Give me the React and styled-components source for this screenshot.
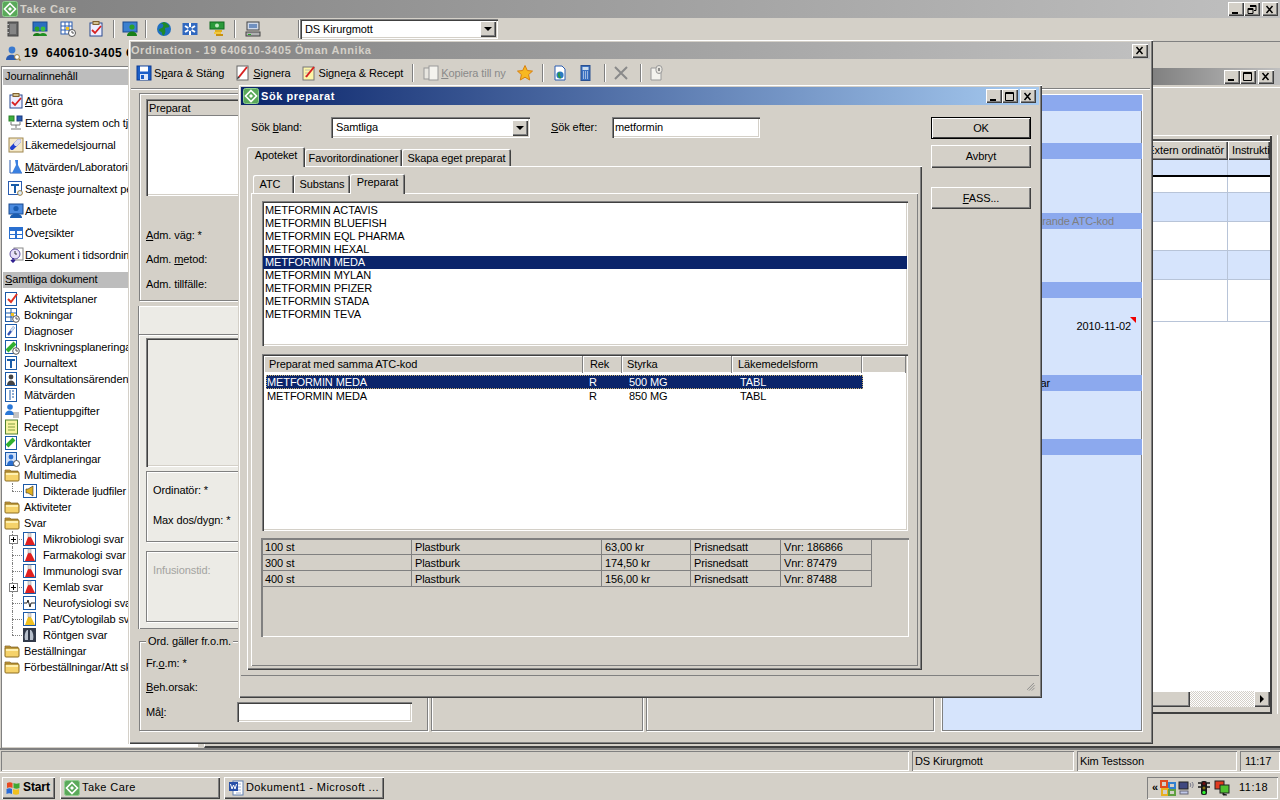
import React from "react";
import styled, { createGlobalStyle, css } from "styled-components";

const Global = createGlobalStyle`
    html, body { margin: 0; padding: 0; background: #d4d0c8; overflow: hidden; }
    * { box-sizing: border-box; }
    u { text-underline-offset: 1px; }
`;

const FONT = `"Liberation Sans", Arial, sans-serif`;

const raised = css`
    box-shadow: inset 1px 1px #fff, inset -1px -1px #404040, inset -2px -2px #808080;
`;
const sunken = css`
    box-shadow: inset 1px 1px #808080, inset 2px 2px #404040, inset -1px -1px #fff, inset -2px -2px #d4d0c8;
`;
const thin = css`
    box-shadow: inset 1px 1px #808080, inset -1px -1px #fff;
`;

// ---------- icons ----------
const paths = {
    logo: <><rect x="0.5" y="0.5" width="15" height="15" rx="2" fill="#5aa95a" stroke="#8fcf8f" /><path d="M8 2.5 13.5 8 8 13.5 2.5 8Z" fill="none" stroke="#fff" strokeWidth="1.6" /><path d="M6 8l2-2 2 2-2 2z" fill="#fff" /></>,
    book: <><rect x="3" y="1" width="10" height="14" fill="#666" stroke="#444" /><rect x="5" y="3" width="6" height="10" fill="#858585" /><rect x="2" y="3" width="2" height="1" fill="#bbb" /><rect x="2" y="7" width="2" height="1" fill="#bbb" /><rect x="2" y="11" width="2" height="1" fill="#bbb" /></>,
    people: <><rect x="1" y="1" width="14" height="9" fill="#2a6fc0" stroke="#1a4a90" /><circle cx="5" cy="8" r="2.4" fill="#2aa02a" /><path d="M1 15c0-4 8-4 8 0z" fill="#187a18" /><circle cx="11" cy="8" r="2.4" fill="#3cc03c" /><path d="M7 15c0-4 8-4 8 0z" fill="#1f8f1f" /></>,
    calclock: <><rect x="1" y="1" width="11" height="12" fill="#fff" stroke="#2a5cb0" /><path d="M1 5h11M1 9h11M5 1v12M9 1v12" stroke="#2a5cb0" /><rect x="6" y="6" width="3" height="3" fill="#f0c020" /><circle cx="12" cy="12" r="3.5" fill="#fff" stroke="#555" /><path d="M12 10v2h2" stroke="#555" fill="none" /></>,
    clipcheck: <><rect x="2" y="2" width="12" height="13" fill="#eef" stroke="#2a4a90" /><rect x="5" y="0.5" width="6" height="3" fill="#d0c090" stroke="#806030" /><path d="M4 9l3 3 6-7" stroke="#d82020" strokeWidth="1.8" fill="none" /></>,
    monitorperson: <><rect x="1" y="1" width="14" height="10" fill="#3a80d0" stroke="#1a4a90" /><circle cx="10" cy="6" r="2.6" fill="#2aa02a" /><path d="M5 15c0-6 10-6 10 0z" fill="#188018" /></>,
    globe: <><circle cx="8" cy="8" r="7" fill="#1e6fc0" /><path d="M4 3c3-1 4 1 3 3S3 7 3 9s3 1 3 3 1 3 2 2 2-4 1-6 3-1 4-2-2-4-5-5z" fill="#1f8a2a" /></>,
    network: <><rect x="0.5" y="2" width="15" height="12" fill="#3068c0" /><path d="M8 2v12M3 5l10 6M13 5 3 11" stroke="#fff" strokeWidth="2" /><circle cx="8" cy="8" r="2" fill="#3068c0" /></>,
    money: <><rect x="1" y="1" width="14" height="7" fill="#2a9a3a" stroke="#106a20" /><circle cx="8" cy="4.5" r="2" fill="#bfe8bf" /><rect x="6" y="9" width="7" height="2" fill="#e0b020" /><rect x="5" y="11" width="7" height="2" fill="#f0c840" /><rect x="7" y="13" width="7" height="2" fill="#c89010" /></>,
    computer: <><rect x="2" y="1" width="12" height="8" fill="#cfd8e8" stroke="#444" /><rect x="4" y="3" width="8" height="4" fill="#7090c0" /><rect x="1" y="11" width="14" height="4" fill="#b0b0b0" stroke="#444" /><rect x="3" y="13" width="3" height="1" fill="#2a2" /></>,
    floppy: <><rect x="1" y="1" width="14" height="14" fill="#1c5fc8" stroke="#0c3a90" /><rect x="4" y="1.5" width="8" height="5" fill="#fff" /><rect x="4" y="9" width="8" height="6" fill="#dfe8f8" /><rect x="5" y="10" width="3" height="4" fill="#1c5fc8" /></>,
    sign: <><rect x="2" y="1" width="11" height="14" fill="#fff" stroke="#666" /><path d="M4 12 12 2" stroke="#d82020" strokeWidth="2" /><path d="M2 14l3-1-2-2z" fill="#333" /></>,
    signy: <><rect x="2" y="2" width="11" height="13" fill="#fdf6a8" stroke="#777" /><path d="M4 5h5M4 8h4M4 11h3" stroke="#bba" /><path d="M5 12 13 2" stroke="#d82020" strokeWidth="2" /></>,
    copygrey: <><rect x="1" y="3" width="9" height="11" fill="#e8e6e0" stroke="#999" /><rect x="6" y="1" width="9" height="14" fill="#f4f3ee" stroke="#999" /></>,
    star: <path d="M8 .5l2.3 5 5.2.6-3.9 3.5 1.1 5.4L8 12.2 3.3 15l1.1-5.4L.5 6.1l5.2-.6z" fill="#f8b820" stroke="#d88010" />,
    docglobe: <><path d="M3 1h7l3 3v11H3z" fill="#fff" stroke="#2a5cb0" /><circle cx="8" cy="10" r="3.6" fill="#2a7ac0" /><path d="M7 7c2 1 0 3 1 4s2 2 0 2.4c-2-1-3-4-1-6.4z" fill="#2a9a3a" /></>,
    calc: <><rect x="3" y="0.5" width="9" height="15" fill="#3a70c0" stroke="#2a5090" /><rect x="4.5" y="2" width="6" height="3" fill="#cde" /><path d="M5 7h1M7 7h1M9 7h1M5 9h1M7 9h1M9 9h1M5 11h1M7 11h1M9 11h1M5 13h1M7 13h1M9 13h1" stroke="#fff" /></>,
    xgrey: <path d="M2 2 14 14M14 2 2 14" stroke="#8a8a8a" strokeWidth="2" />,
    clipdoc: <><path d="M3 3h6l4 3v9H3z" fill="#f4f3ee" stroke="#999" /><rect x="8" y="0.5" width="6" height="8" rx="3" fill="#e8e6e0" stroke="#999" /><path d="M11 3v3" stroke="#666" strokeWidth="1.4" /></>,
    magperson: <><circle cx="7" cy="5" r="3.4" fill="#3a7ad0" /><path d="M1 15c0-7 11-7 11 0z" fill="#2a5cb0" /><circle cx="12" cy="12" r="2.4" fill="#fff" stroke="#a08040" /><path d="M14 14l1.5 1.5" stroke="#a08040" strokeWidth="1.5" /></>,
    extern: <><rect x="1" y="1" width="5" height="5" fill="#3fb03f" stroke="#2a802a" /><rect x="9" y="1" width="5" height="5" fill="#2a5cb0" stroke="#1a3a80" /><path d="M3 7v3h9V7M8 10v3M3 14h10" stroke="#777" fill="none" /></>,
    pill: <><rect x="1" y="1" width="14" height="14" fill="#f4e8c8" stroke="#a08850" /><path d="M4 11 11 4" stroke="#2040d0" strokeWidth="4" strokeLinecap="round" /><path d="M8 7 11 4" stroke="#dde" strokeWidth="4" strokeLinecap="round" /></>,
    flask: <><path d="M2 1v13h12" stroke="#2a5cb0" fill="none" /><path d="M7 1h3v5l4 8H4l4-8z" fill="#3a80e0" /></>,
    tmag: <><rect x="0.5" y="0.5" width="13" height="13" fill="#fff" stroke="#2a5cb0" /><path d="M3 3h8v2H8v7H6V5H3z" fill="#1a5ca8" /><circle cx="12" cy="12" r="2.4" fill="#def" stroke="#a08040" /></>,
    arbete: <><rect x="1" y="1" width="14" height="10" fill="#4a8adf" stroke="#1a4a90" /><circle cx="8" cy="5.5" r="2.6" fill="#1a5cb0" /><path d="M2 15c0-6 12-6 12 0z" fill="#1a5cb0" /></>,
    grid: <><rect x="1" y="2" width="14" height="12" fill="#2a70d0" /><path d="M2 6h5v3H2zM9 6h5v3H9zM2 10h5v3H2zM9 10h5v3H9z" fill="#fff" /></>,
    docclock: <><rect x="6" y="1" width="9" height="12" fill="#fff" stroke="#888" /><circle cx="7" cy="7" r="5" fill="#e8e0f8" stroke="#6050a0" /><path d="M7 4v3h2" stroke="#333" fill="none" /><path d="M5 11v4M3 13l2 2 2-2" stroke="#302090" fill="none" strokeWidth="1.5" /></>,
    d_plan: <><rect x="1.5" y="1.5" width="11" height="13" fill="#fff" stroke="#1c5aa8" /><path d="M4 8l3 3 6-8" stroke="#e03020" strokeWidth="2" fill="none" /></>,
    d_book: <><rect x="1.5" y="1.5" width="11" height="13" fill="#fff" stroke="#1c5aa8" /><path d="M2 6h10M2 10h10M7 2v12" stroke="#1c5aa8" /><rect x="7" y="6" width="3" height="3" fill="#f0c020" /><circle cx="12" cy="12" r="3.3" fill="#fff" stroke="#555" /><path d="M12 10v2h2" stroke="#555" fill="none" /></>,
    d_diag: <><rect x="1.5" y="1.5" width="11" height="13" fill="#fff" stroke="#1c5aa8" /><path d="M4 12 10 4" stroke="#3050b0" strokeWidth="2.4" /><path d="M7 8 10 4" stroke="#cde" strokeWidth="2.4" /></>,
    d_insk: <><rect x="1.5" y="1.5" width="11" height="13" fill="#fff" stroke="#1c5aa8" /><path d="M3 12 11 4" stroke="#30b030" strokeWidth="4" /><circle cx="12" cy="12" r="3.3" fill="#fff" stroke="#555" /><path d="M12 10v2h2" stroke="#555" fill="none" /></>,
    d_text: <><rect x="1.5" y="1.5" width="11" height="13" fill="#fff" stroke="#1c5aa8" /><path d="M3 4h8v2H8v7H6V6H3z" fill="#1a5ca8" /></>,
    d_kons: <><rect x="1.5" y="1.5" width="11" height="13" fill="#fff" stroke="#1c5aa8" /><circle cx="7" cy="6" r="2.4" fill="#444" /><path d="M3 14c0-6 8-6 8 0z" fill="#444" /></>,
    d_mat: <><rect x="1.5" y="1.5" width="11" height="13" fill="#fff" stroke="#1c5aa8" /><path d="M6 3v10M8 4h2M8 7h2M8 10h2" stroke="#1c5aa8" /></>,
    d_pat: <><circle cx="6" cy="4" r="2.8" fill="#2a78d8" /><path d="M1 12c0-6 9-6 9 0z" fill="#2a78d8" /><path d="M9 10h6M9 12h6M9 14h6" stroke="#888" /></>,
    d_recept: <><rect x="1.5" y="1" width="12" height="14" fill="#f8f4a0" stroke="#508030" /><path d="M4 5h7M4 8h7M4 11h7" stroke="#80a040" /></>,
    d_vard: <><rect x="1.5" y="1.5" width="11" height="13" fill="#fff" stroke="#1c5aa8" /><path d="M3 11 10 4" stroke="#30b030" strokeWidth="4" /></>,
    d_plan2: <><rect x="1.5" y="1.5" width="11" height="13" fill="#cfe0f8" stroke="#1c5aa8" /><circle cx="7" cy="6" r="2.4" fill="#2a6fd0" /><path d="M3 14c0-6 8-6 8 0z" fill="#2a6fd0" /><circle cx="12.5" cy="12.5" r="3" fill="#fff" stroke="#555" /></>,
    folder: <><path d="M1 4V3h5l1 1h7v2H1z" fill="#c9a040" stroke="#806020" strokeWidth=".7" /><rect x="1" y="5" width="14" height="9" rx="1" fill="#f5d26a" stroke="#8c6c20" /><rect x="2" y="6" width="12" height="2" fill="#fff0b0" /></>,
    sound: <><rect x="1.5" y="1.5" width="13" height="13" fill="#fff" stroke="#1c5aa8" /><path d="M4 6h2l5-3v10L6 10H4z" fill="#e0b020" stroke="#333" strokeWidth=".6" /></>,
    labred: <><rect x="1.5" y="1.5" width="12" height="13" fill="#fff" stroke="#1c5aa8" /><path d="M6 2h3v4l4 8H3l3-8z" fill="#e02020" /><path d="M6 2h3v4H6z" fill="#ddd" stroke="#999" strokeWidth=".5" /></>,
    labyellow: <><rect x="1.5" y="1.5" width="12" height="13" fill="#fff" stroke="#1c5aa8" /><path d="M6 2h3v4l4 8H3l3-8z" fill="#f0c020" /><path d="M6 2h3v4H6z" fill="#ddd" stroke="#999" strokeWidth=".5" /></>,
    neuro: <><rect x="1.5" y="1.5" width="12" height="13" fill="#fff" stroke="#1c5aa8" /><path d="M2 8h3l1-3 2 7 1-4h4" stroke="#222" fill="none" /></>,
    xray: <><rect x="1" y="1" width="13" height="14" fill="#303848" /><path d="M5 3c-2 2-3 6-2 10h3V3zM9 3c2 2 3 6 2 10H8V3z" fill="#b8c0cc" /></>,
    winflag: <><path d="M2 3c2-1 4-1 5.5 0v5C6 7 4 7 2 8z" fill="#e84a20" /><path d="M8.5 3c2 1 4 1 6 0v5c-2 1-4 1-6 0z" fill="#40a830" /><path d="M1.5 9c2-1 4-1 5.5 0v5c-2-1-3.500-1-5.500 0z" fill="#2a6cd8" /><path d="M8 9c2 1 4 1 6 0v5c-2 1-4 1-6 0z" fill="#f0c020" /></>,
    word: <><rect x="5" y="1" width="10" height="14" fill="#fff" stroke="#6080b0" /><path d="M8 4h5M8 7h5M8 10h5M8 13h5" stroke="#a0b0d0" /><rect x="1" y="2" width="9" height="9" fill="#2850a8" /><path d="M2.500 4l1.500 5 1.500-4 1.500 4 1.500-5" stroke="#fff" fill="none" /></>,
    office: <><rect x="1" y="1" width="6" height="6" fill="none" stroke="#e04a20" strokeWidth="2" /><rect x="9" y="3" width="6" height="5" fill="none" stroke="#3080d0" strokeWidth="2" /><rect x="2" y="9" width="6" height="6" fill="none" stroke="#e8b020" strokeWidth="2" /><rect x="9" y="10" width="6" height="5" fill="none" stroke="#60a040" strokeWidth="2" /></>,
    netpc: <><rect x="1" y="2" width="9" height="7" fill="#404880" stroke="#222" /><rect x="2" y="11" width="8" height="3" fill="#c0c8e8" stroke="#667" /><path d="M12 3c1 1 1 3 0 4M14 2c1.500 2 1.500 4 0 6" stroke="#778" fill="none" /></>,
    traffic: <><rect x="5" y="1" width="6" height="14" rx="2" fill="#1a1a1a" /><path d="M2 3h3M11 3h3M2 7h3M11 7h3" stroke="#1a1a1a" strokeWidth="1.5" /><circle cx="8" cy="3.500" r="1.500" fill="#701010" /><circle cx="8" cy="8" r="1.500" fill="#807010" /><circle cx="8" cy="12.500" r="1.700" fill="#30f030" /></>,
    screens: <><rect x="1" y="1" width="9" height="8" fill="#e03a20" stroke="#222" /><rect x="6" y="5" width="9" height="8" fill="#50c030" stroke="#222" /><path d="M9 13v2h4" stroke="#222" /></>,
    grip: <path d="M10 0 0 10M11 3 3 11M11 7 7 11" stroke="#808080" strokeWidth="1.200" fill="none" />,
};

const Svg = styled.svg`
    flex: none;
    display: block;
`;

const Icon = ({ name, w = 16, h = 16 }) => (
    <Svg width={w} height={h} viewBox="0 0 16 16">{paths[name]}</Svg>
);

// ---------- desktop ----------
const Desktop = styled.div`
    position: relative;
    width: 1280px;
    height: 800px;
    overflow: hidden;
    background: #d4d0c8;
    font: 11px/13px ${FONT};
    letter-spacing: -0.1px;
    color: #000;
    display: flex;
    flex-direction: column;
`;

const TitleBar = styled.div`
    flex: none;
    height: ${(p) => p.$h || 18}px;
    margin: ${(p) => p.$m || 0};
    display: flex;
    align-items: center;
    padding: ${(p) => p.$pad || "0 2px"};
    background: ${(p) => (p.$active
        ? "linear-gradient(90deg, #0a246a, #a6caf0)"
        : "linear-gradient(90deg, #808080, #c0c0c0)")};
    color: ${(p) => (p.$active ? "#fff" : "#d4d0c8")};
    font-weight: bold;
    font-size: 11px;
    letter-spacing: 0.55px;
`;

const TitleText = styled.span`
    flex: 1;
    margin-left: ${(p) => p.$ml || 0}px;
    white-space: nowrap;
`;

const CtrlBtn = styled.div`
    width: 16px;
    height: 14px;
    background: #d4d0c8;
    ${raised};
    display: flex;
    align-items: center;
    justify-content: center;
    flex: none;
    margin-left: ${(p) => p.$ml || 0}px;
`;

const CtrlGlyph = ({ kind }) => (
    <Svg width="10" height="9" viewBox="0 0 10 9">
        {kind === "min" && <path d="M1 7h6v2H1z" fill="#000" />}
        {kind === "max" && <path d="M.5 .5h8v8h-8zM.5 1.500h8" fill="none" stroke="#000" />}
        {kind === "res" && <path d="M3 .5h6v5H7M3 1.500h6M1 3.500h5v5H1zM1 4.500h5" fill="none" stroke="#000" />}
        {kind === "x" && <path d="M1.500 1 7.500 8M7.500 1 1.500 8" stroke="#000" strokeWidth="1.500" />}
    </Svg>
);

const Toolbar = styled.div`
    flex: none;
    height: ${(p) => p.$h || 22}px;
    display: flex;
    align-items: center;
    padding-left: ${(p) => p.$pl || 0}px;
`;

const ToolItem = styled.div`
    display: flex;
    align-items: center;
    gap: ${(p) => p.$gap ?? 2}px;
    margin-left: ${(p) => p.$ml || 0}px;
    color: ${(p) => (p.$off ? "#8a8a8a" : "#000")};
    white-space: nowrap;
`;

const ToolSep = styled.div`
    flex: none;
    width: 2px;
    height: 18px;
    margin-left: ${(p) => p.$ml || 0}px;
    border-left: 1px solid #808080;
    border-right: 1px solid #fff;
`;

const Combo = styled.div`
    flex: none;
    width: ${(p) => p.$w}px;
    height: ${(p) => p.$h || 20}px;
    margin-left: ${(p) => p.$ml || 0}px;
    background: #fff;
    ${sunken};
    display: flex;
    align-items: center;
    padding: 0 2px 0 5px;
`;

const ComboText = styled.span`
    flex: 1;
`;

const ComboBtn = styled.div`
    width: 16px;
    height: 16px;
    background: #d4d0c8;
    ${raised};
    display: flex;
    align-items: center;
    justify-content: center;
    &::after {
        content: "";
        border-left: 4px solid transparent;
        border-right: 4px solid transparent;
        border-top: 4px solid #000;
    }
`;

const Workspace = styled.div`
    flex: 1;
    min-height: 0;
    display: flex;
`;

const LeftPane = styled.div`
    width: 204px;
    flex: none;
    display: flex;
    flex-direction: column;
`;

const RightPane = styled.div`
    flex: 1;
    border-bottom: 2px solid #404040;
    border-left: 1px solid #fff;
    margin-top: 2px;
`;

const PatientRow = styled.div`
    height: 26px;
    flex: none;
    display: flex;
    align-items: center;
    gap: 3px;
    padding-left: 5px;
    font-weight: bold;
    font-size: 12px;
    letter-spacing: 0.5px;
    white-space: nowrap;
`;

const Nav = styled.div`
    flex: 1;
    margin: 0 5px 0 1px;
    background: #fff;
    box-shadow: inset 1px 1px #808080, inset -1px -1px #d4d0c8;
    padding: 3px 0 0 2px;
    overflow: hidden;
`;

const NavHead = styled.div`
    height: 16px;
    line-height: 15px;
    background: #bdbdbd;
    padding-left: 2px;
    white-space: nowrap;
`;

const NavList = styled.div`
    padding: ${(p) => p.$pad};
`;

const NavItem = styled.div`
    height: 22px;
    display: flex;
    align-items: center;
    gap: 1px;
    padding-left: 5px;
    white-space: nowrap;
`;

const TreeItem = styled.div`
    position: relative;
    height: 16px;
    display: flex;
    align-items: center;
    gap: ${(p) => (p.$child ? 5 : 4)}px;
    padding-left: ${(p) => (p.$child ? 19 : 1)}px;
    white-space: nowrap;
    ${(p) => p.$child && css`
        &::before {
            content: "";
            position: absolute;
            left: 9px;
            top: 0;
            height: ${p.$last ? 8 : 16}px;
            border-left: 1px dotted #808080;
        }
        &::after {
            content: "";
            position: absolute;
            left: 9px;
            top: 8px;
            width: 10px;
            border-top: 1px dotted #808080;
        }
    `}
`;

const PlusBox = styled.div`
    position: absolute;
    left: 6px;
    top: 4px;
    width: 9px;
    height: 9px;
    z-index: 1;
    background: #fff;
    border: 1px solid #808080;
    &::before {
        content: "";
        position: absolute;
        left: 1px;
        top: 3px;
        width: 5px;
        height: 1px;
        background: #000;
    }
    &::after {
        content: "";
        position: absolute;
        left: 3px;
        top: 1px;
        width: 1px;
        height: 5px;
        background: #000;
    }
`;

const StatusBar = styled.div`
    flex: none;
    height: 24px;
    border-top: 2px solid #808080;
    display: grid;
    grid-template-columns: 908px 162px 160px 1fr;
    gap: 3px;
    padding: 1px 0 1px 1px;
`;

const StatusCell = styled.div`
    ${thin};
    display: flex;
    align-items: center;
    padding-left: ${(p) => p.$pl || 3}px;
    white-space: nowrap;
`;

const Taskbar = styled.div`
    flex: none;
    height: 28px;
    box-shadow: inset 0 1px #fff;
    display: flex;
    align-items: center;
    padding: 3px 2px 0 2px;
`;

const StartBtn = styled.div`
    width: 53px;
    height: 22px;
    ${raised};
    display: flex;
    align-items: center;
    gap: 2px;
    padding-left: 3px;
    font-weight: bold;
    font-size: 12px;
`;

const TaskBtn = styled.div`
    width: 160px;
    height: 22px;
    margin-left: ${(p) => p.$ml}px;
    ${raised};
    display: flex;
    align-items: center;
    gap: 2px;
    padding-left: 4px;
    white-space: nowrap;
    letter-spacing: 0.4px;
`;

const Tray = styled.div`
    width: 131px;
    height: 22px;
    margin-left: auto;
    ${thin};
    display: flex;
    align-items: center;
    gap: 2px;
    padding-left: 5px;
`;

const TrayTime = styled.span`
    margin-left: 7px;
    letter-spacing: 0.5px;
`;

// ---------- windows ----------
const Win = styled.div`
    position: absolute;
    left: ${(p) => p.$x}px;
    top: ${(p) => p.$y}px;
    width: ${(p) => p.$w}px;
    height: ${(p) => p.$h}px;
    background: #d4d0c8;
    box-shadow: inset 1px 1px #d4d0c8, inset 2px 2px #fff, inset -1px -1px #404040, inset -2px -2px #808080;
    padding: 3px;
    display: flex;
    flex-direction: column;
`;

// back window, right of the order window
const BackWin = styled.div`
    position: absolute;
    left: 1152px;
    top: 41px;
    width: 128px;
    height: 707px;
    border-top: 1px solid #808080;
    display: flex;
    flex-direction: column;
`;

const BackRule = styled.div`
    flex: none;
    height: 1px;
    margin-top: 2px;
    background: #fff;
`;

const BackFrame = styled.div`
    flex: none;
    height: 579px;
    margin: 47px 8px 0 0;
    padding: 6px 2px 6px 0;
    box-shadow: inset 0 1px #fff, inset -2px 0 #404040, inset 0 -2px #404040, 5px 0 #d4d0c8, 6px 0 #fff;
`;

const BackTable = styled.div`
    height: 566px;
    background: #fff;
    display: flex;
    flex-direction: column;
    box-shadow: 0 -2px #505050;
`;

const BackHead = styled.div`
    height: 19px;
    flex: none;
    display: grid;
    grid-template-columns: 76px 1fr;
    background: #d4d0c8;
`;

const BackHeadCell = styled.div`
    ${raised};
    overflow: hidden;
    white-space: nowrap;
    padding: 3px 0 0 4px;
`;

const BackHeadEnd = styled(BackHeadCell)`
    display: flex;
    justify-content: flex-end;
    padding: 3px 4px 0 0;
`;

const BackRow = styled.div`
    height: ${(p) => p.$h}px;
    flex: none;
    display: grid;
    grid-template-columns: 76px 1fr;
    background: ${(p) => (p.$blue ? "#d6e4fc" : "#fff")};
    border-bottom: ${(p) => (p.$thick ? "2px solid #000" : "1px solid #b8c4d8")};
`;

const BackCol = styled.div`
    border-right: 1px solid #b8c4d8;
`;

const BackSpacer = styled.div`
    flex: 1;
`;

const HScroll = styled.div`
    height: 16px;
    flex: none;
    display: flex;
    background: repeating-conic-gradient(#d4d0c8 0 25%, #fff 0 50%) 0 0 / 2px 2px;
`;

const HThumb = styled.div`
    width: 38px;
    background: #d4d0c8;
    ${raised};
`;

const HTrack = styled.div`
    flex: 1;
`;

const HArrow = styled.div`
    width: 16px;
    background: #d4d0c8;
    ${raised};
    display: flex;
    align-items: center;
    justify-content: center;
    &::after {
        content: "";
        border-top: 4px solid transparent;
        border-bottom: 4px solid transparent;
        border-left: 4px solid #000;
    }
`;

const OrdBody = styled.div`
    flex: 1;
    min-height: 0;
    display: flex;
    gap: 7px;
    padding: 4px 8px 10px 8px;
    border-top: 1px solid #808080;
    box-shadow: inset 0 1px #fff;
    margin-top: 1px;
`;

const OrdLeft = styled.div`
    flex: 1;
    min-width: 0;
    display: flex;
    flex-direction: column;
    gap: 5px;
`;

const Group = styled.div`
    position: relative;
    border: 1px solid #808080;
    box-shadow: inset 1px 1px #fff, 1px 1px #fff;
`;

const TopGroup = styled(Group)`
    flex: none;
    height: 208px;
    padding: 5px 6px;
`;

const PrepList = styled.div`
    width: 500px;
    height: 97px;
    background: #fff;
    ${sunken};
    padding: 2px;
`;

const PrepHead = styled.div`
    height: 15px;
    padding: 1px 0 0 1px;
    border-bottom: 1px solid #808080;
    background: #d4d0c8;
`;

const FieldLabel = styled.div`
    height: ${(p) => p.$h || 24}px;
    white-space: nowrap;
    color: ${(p) => (p.$dim ? "#a3a3a0" : "#000")};
`;

const AdmLabels = styled.div`
    margin-top: 33px;
`;

const LightPanel = styled.div`
    flex: none;
    height: 323px;
    background: #ecebe6;
    box-shadow: inset 1px 1px #fff, -1px 0 #808080, inset -1px -1px #808080;
    padding-top: 28px;
    display: flex;
    flex-direction: column;
`;

const LightRule = styled.div`
    border-top: 1px solid #808080;
    box-shadow: inset 0 1px #fff;
    height: 4px;
`;

const SunkBox = styled.div`
    height: 129px;
    margin: 0 7px;
    ${sunken};
    flex: none;
`;

const LightGroup = styled(Group)`
    margin: ${(p) => p.$m};
    height: ${(p) => p.$h}px;
    padding: 12px 6px;
    flex: none;
`;

const BottomRow = styled.div`
    flex: 1;
    display: grid;
    grid-template-columns: 289px 212px 288px;
    gap: 3px;
    margin-top: 7px;
`;

const DateGroup = styled(Group)`
    padding: 15px 6px 0;
    position: relative;
`;

const Legend = styled.div`
    position: absolute;
    left: 6px;
    top: -7px;
    padding: 0 2px;
    background: #d4d0c8;
`;

const MalRow = styled.div`
    display: flex;
    align-items: center;
`;

const MalInput = styled.div`
    width: 175px;
    height: 20px;
    margin-left: 71px;
    background: #fff;
    ${sunken};
`;

const BluePanel = styled.div`
    width: 200px;
    flex: none;
    margin-top: 2px;
    background: #d6e4fc;
    box-shadow: 0 0 0 1px #fff, 0 0 0 1px #808080 inset;
    display: flex;
    flex-direction: column;
`;

const BlueBand = styled.div`
    height: 16px;
    flex: none;
    margin-top: ${(p) => p.$mt || 0}px;
    background: #8ca9ee;
    line-height: 16px;
    display: flex;
    justify-content: flex-end;
    white-space: nowrap;
    padding-right: ${(p) => p.$pr || 0}px;
    color: ${(p) => p.$ink || "#000"};
`;

const DateCell = styled.div`
    position: relative;
    align-self: flex-end;
    margin: 22px 11px 0 0;
    &::after {
        content: "";
        position: absolute;
        right: -5px;
        top: -3px;
        border-top: 6px solid #f00000;
        border-left: 6px solid transparent;
    }
`;

// ---------- search dialog ----------
const DialogBody = styled.div`
    flex: 1;
    min-height: 0;
    display: flex;
    padding: 12px 0 0 6px;
    gap: 9px;
`;

const DialogMain = styled.div`
    width: 675px;
    flex: none;
    display: flex;
    flex-direction: column;
`;

const SearchRow = styled.div`
    height: 21px;
    flex: none;
    display: flex;
    align-items: center;
    padding-left: 4px;
`;

const Sized = styled.span`
    flex: none;
    width: ${(p) => p.$w}px;
    margin-left: ${(p) => p.$ml || 0}px;
    white-space: nowrap;
`;

const InputBox = styled.div`
    width: ${(p) => p.$w}px;
    height: 21px;
    background: #fff;
    ${sunken};
    padding: 4px 3px;
    flex: none;
`;

const TabRow = styled.div`
    height: ${(p) => p.$h}px;
    flex: none;
    display: flex;
    align-items: flex-end;
    margin-top: ${(p) => p.$mt || 0}px;
    padding-left: ${(p) => p.$pl || 0}px;
    position: relative;
    z-index: 1;
`;

const Tab = styled.div`
    height: ${(p) => p.$h}px;
    width: ${(p) => p.$w}px;
    flex: none;
    background: #d4d0c8;
    margin-bottom: ${(p) => (p.$active ? -1 : 0)}px;
    padding: ${(p) => (p.$active ? "0 0 3px" : `1px ${p.$pr || 0}px 0 0`)};
    display: flex;
    align-items: center;
    justify-content: center;
    white-space: nowrap;
    border-radius: 2px 2px 0 0;
    box-shadow: inset 1px 1px #fff, inset -1px 0 #404040, inset -2px 0 #808080;
`;

const TabPane = styled.div`
    flex: none;
    background: #d4d0c8;
    height: ${(p) => p.$h}px;
    padding: ${(p) => p.$pad || 0};
    box-shadow: ${(p) => p.$outer
        ? "inset 1px 1px #fff, inset -1px -1px #404040, inset -2px -2px #808080"
        : "inset 1px 1px #fff, inset -1px -1px #808080"};
`;

const ListBox = styled.div`
    height: 145px;
    background: #fff;
    ${sunken};
    padding: 2px 1px;
`;

const ListLine = styled.div`
    height: 13px;
    line-height: 13px;
    padding-left: 2px;
    white-space: nowrap;
    background: ${(p) => (p.$sel ? "#0a246a" : "transparent")};
    color: ${(p) => (p.$sel ? "#fff" : "#000")};
`;

const ListTop = styled.div`
    height: 1px;
`;

const ListView = styled.div`
    height: 177px;
    margin-top: 8px;
    background: #fff;
    ${sunken};
    padding: 2px;
`;

const LvHead = styled.div`
    display: grid;
    grid-template-columns: 319px 39px 110px 130px 1fr;
    height: 17px;
    background: #d4d0c8;
`;

const LvHeadCell = styled.div`
    padding: 2px 0 0 ${(p) => p.$pl || 5}px;
    box-shadow: inset -1px 0 #808080, inset 1px 1px #fff, inset 0 -1px #fff;
    white-space: nowrap;
`;

const LvRows = styled.div`
    padding: 2px 0 0 2px;
    width: 599px;
`;

const LvRow = styled.div`
    height: 14px;
    display: grid;
    grid-template-columns: 322px 40px 111px 1fr;
    align-items: center;
    white-space: nowrap;
    padding-left: 1px;
    background: ${(p) => (p.$sel ? "#0a246a" : "transparent")};
    color: ${(p) => (p.$sel ? "#fff" : "#000")};
    ${(p) => p.$sel && css`outline: 1px dotted #c8b070; outline-offset: -1px;`}
`;

const PriceBox = styled.div`
    height: 99px;
    margin: 7px -1px 0 -1px;
    box-shadow: inset 2px 2px #808080, inset -1px -1px #fff;
    padding: 1px 0 0 1px;
`;

const PriceTable = styled.div`
    width: 611px;
    display: grid;
    grid-template-columns: 150px 190px 89px 90px 91px;
`;

const PriceCell = styled.div`
    height: 16px;
    line-height: 16px;
    padding-left: 3px;
    border-right: 1px solid #808080;
    border-bottom: 1px solid #808080;
    white-space: nowrap;
`;

const DialogSide = styled.div`
    width: 100px;
    flex: none;
    display: flex;
    flex-direction: column;
`;

const PushBtn = styled.div`
    height: ${(p) => p.$h || 23}px;
    margin-top: ${(p) => p.$mt || 0}px;
    flex: none;
    background: #d4d0c8;
    ${raised};
    display: flex;
    align-items: center;
    justify-content: center;
    ${(p) => p.$def && css`
        outline: 1px solid #000;
        outline-offset: -1px;
        box-shadow: inset 2px 2px #fff, inset -2px -2px #404040;
    `}
`;

const GripBar = styled.div`
    flex: none;
    height: 20px;
    margin-top: auto;
    box-shadow: inset 0 1px #808080;
    display: flex;
    justify-content: flex-end;
    align-items: flex-end;
    padding: 0 1px 1px 0;
`;

const navTop = [
    ["clipcheck", <><u>A</u>tt göra</>],
    ["extern", "Externa system och tjänster"],
    ["pill", <>Läkemedels<u>j</u>ournal</>],
    ["flask", <><u>M</u>ätvärden/Laboratorie</>],
    ["tmag", <>Senas<u>t</u>e journaltext per</>],
    ["arbete", "Arbete"],
    ["grid", <>Öve<u>r</u>sikter</>],
    ["docclock", <><u>D</u>okument i tidsordning</>],
];

const tree = [
    ["d_plan", "Aktivitetsplaner"],
    ["d_book", "Bokningar"],
    ["d_diag", "Diagnoser"],
    ["d_insk", "Inskrivningsplaneringar"],
    ["d_text", "Journaltext"],
    ["d_kons", "Konsultationsärenden"],
    ["d_mat", "Mätvärden"],
    ["d_pat", "Patientuppgifter"],
    ["d_recept", "Recept"],
    ["d_vard", "Vårdkontakter"],
    ["d_plan2", "Vårdplaneringar"],
    ["folder", "Multimedia"],
    ["sound", "Dikterade ljudfiler", { child: true, last: true }],
    ["folder", "Aktiviteter"],
    ["folder", "Svar"],
    ["labred", "Mikrobiologi svar", { child: true, plus: true }],
    ["labred", "Farmakologi svar", { child: true }],
    ["labred", "Immunologi svar", { child: true }],
    ["labred", "Kemlab svar", { child: true, plus: true }],
    ["neuro", "Neurofysiologi svar", { child: true }],
    ["labyellow", "Pat/Cytologilab svar", { child: true }],
    ["xray", "Röntgen svar", { child: true, last: true }],
    ["folder", "Beställningar"],
    ["folder", "Förbeställningar/Att skriva ut"],
];

const drugs = ["METFORMIN ACTAVIS", "METFORMIN BLUEFISH", "METFORMIN EQL PHARMA", "METFORMIN HEXAL", "METFORMIN MEDA", "METFORMIN MYLAN", "METFORMIN PFIZER", "METFORMIN STADA", "METFORMIN TEVA"];

const prices = [
    ["100 st", "Plastburk", "63,00 kr", "Prisnedsatt", "Vnr: 186866"],
    ["300 st", "Plastburk", "174,50 kr", "Prisnedsatt", "Vnr: 87479"],
    ["400 st", "Plastburk", "156,00 kr", "Prisnedsatt", "Vnr: 87488"],
];

const MainChrome = () => (
    <>
        <TitleBar>
            <Icon name="logo" />
            <TitleText $ml={2}>Take Care</TitleText>
            <CtrlBtn><CtrlGlyph kind="min" /></CtrlBtn>
            <CtrlBtn><CtrlGlyph kind="res" /></CtrlBtn>
            <CtrlBtn $ml={2}><CtrlGlyph kind="x" /></CtrlBtn>
        </TitleBar>
        <Toolbar>
            <ToolItem $ml={5}><Icon name="book" /></ToolItem>
            <ToolItem $ml={11}><Icon name="people" /></ToolItem>
            <ToolItem $ml={12}><Icon name="calclock" /></ToolItem>
            <ToolItem $ml={12}><Icon name="clipcheck" /></ToolItem>
            <ToolSep $ml={9} />
            <ToolItem $ml={7}><Icon name="monitorperson" /></ToolItem>
            <ToolSep $ml={7} />
            <ToolItem $ml={9}><Icon name="globe" /></ToolItem>
            <ToolItem $ml={10}><Icon name="network" /></ToolItem>
            <ToolItem $ml={11}><Icon name="money" /></ToolItem>
            <ToolSep $ml={9} />
            <ToolItem $ml={9}><Icon name="computer" /></ToolItem>
            <ToolSep $ml={37} />
            <Combo $w={198}>
                <ComboText>DS Kirurgmott</ComboText>
                <ComboBtn />
            </Combo>
        </Toolbar>
    </>
);

const LeftNav = () => (
    <LeftPane>
        <PatientRow>
            <Icon name="magperson" />
            <span>19&nbsp;&nbsp;640610-3405 Öman Annika</span>
        </PatientRow>
        <Nav>
            <NavHead>Journalinnehåll</NavHead>
            <NavList $pad="5px 0 6px 0">
                {navTop.map(([icon, label], i) => (
                    <NavItem key={i}><Icon name={icon} /><span>{label}</span></NavItem>
                ))}
            </NavList>
            <NavHead><u>S</u>amtliga dokument</NavHead>
            <NavList $pad="3px 0 0 0">
                {tree.map(([icon, label, o = {}], i) => (
                    <TreeItem key={i} $child={o.child} $last={o.last}>
                        {o.plus && <PlusBox />}
                        <Icon name={icon} />
                        <span>{label}</span>
                    </TreeItem>
                ))}
            </NavList>
        </Nav>
    </LeftPane>
);

const RightBack = () => (
    <BackWin>
        <TitleBar $h={17} $m="26px 0 0 0" $pad="0 6px 0 0">
            <TitleText />
            <CtrlBtn><CtrlGlyph kind="min" /></CtrlBtn>
            <CtrlBtn><CtrlGlyph kind="max" /></CtrlBtn>
            <CtrlBtn $ml={2}><CtrlGlyph kind="x" /></CtrlBtn>
        </TitleBar>
        <BackRule />
        <BackFrame>
            <BackTable>
                <BackHead>
                    <BackHeadEnd>Extern ordinatör</BackHeadEnd>
                    <BackHeadCell>Instruktion</BackHeadCell>
                </BackHead>
                <BackRow $h={17} $blue $thick><BackCol /></BackRow>
                <BackRow $h={16}><BackCol /></BackRow>
                <BackRow $h={29} $blue><BackCol /></BackRow>
                <BackRow $h={29}><BackCol /></BackRow>
                <BackRow $h={29} $blue><BackCol /></BackRow>
                <BackRow $h={42}><BackCol /></BackRow>
                <BackSpacer />
                <HScroll>
                    <HThumb />
                    <HTrack />
                    <HArrow />
                </HScroll>
            </BackTable>
        </BackFrame>
    </BackWin>
);

const OrderWindow = () => (
    <Win $x={128} $y={39} $w={1025} $h={705}>
        <TitleBar $h={17} $pad="0 2px 0 0">
            <TitleText>Ordination - 19 640610-3405 Öman Annika</TitleText>
            <CtrlBtn><CtrlGlyph kind="x" /></CtrlBtn>
        </TitleBar>
        <Toolbar $h={28} $pl={5}>
            <ToolItem><Icon name="floppy" /><span>S<u>p</u>ara &amp; Stäng</span></ToolItem>
            <ToolItem $ml={11}><Icon name="sign" /><span><u>S</u>ignera</span></ToolItem>
            <ToolItem $ml={10}><Icon name="signy" /><span>Signe<u>r</u>a &amp; Recept</span></ToolItem>
            <ToolSep $ml={9} />
            <ToolItem $ml={9} $off><Icon name="copygrey" /><span><u>K</u>opiera till ny</span></ToolItem>
            <ToolItem $ml={11}><Icon name="star" /></ToolItem>
            <ToolSep $ml={9} />
            <ToolItem $ml={8}><Icon name="docglobe" /></ToolItem>
            <ToolItem $ml={10}><Icon name="calc" /></ToolItem>
            <ToolSep $ml={10} />
            <ToolItem $ml={7}><Icon name="xgrey" /></ToolItem>
            <ToolSep $ml={11} />
            <ToolItem $ml={6}><Icon name="clipdoc" /></ToolItem>
        </Toolbar>
        <OrdBody>
            <OrdLeft>
                <TopGroup>
                    <PrepList><PrepHead>Preparat</PrepHead></PrepList>
                    <AdmLabels>
                        <FieldLabel><u>A</u>dm. väg: *</FieldLabel>
                        <FieldLabel $h={25}>Adm. <u>m</u>etod:</FieldLabel>
                        <FieldLabel>Adm. tillfälle:</FieldLabel>
                    </AdmLabels>
                </TopGroup>
                <LightPanel>
                    <LightRule />
                    <SunkBox />
                    <LightGroup $m="4px 0 0 7px" $h={71}>
                        <FieldLabel $h={30}>Ordinatör: *</FieldLabel>
                        <FieldLabel>Max dos/dygn: *</FieldLabel>
                    </LightGroup>
                    <LightGroup $m="9px 0 0 7px" $h={71}>
                        <FieldLabel $dim>Infusionstid:</FieldLabel>
                    </LightGroup>
                </LightPanel>
                <BottomRow>
                    <DateGroup>
                        <Legend>Ord. gäller fr.o.m.</Legend>
                        <FieldLabel>Fr.<u>o</u>.m: *</FieldLabel>
                        <FieldLabel $h={21}><u>B</u>eh.orsak:</FieldLabel>
                        <MalRow>
                            <span>Må<u>l</u>:</span>
                            <MalInput />
                        </MalRow>
                    </DateGroup>
                    <Group />
                    <Group />
                </BottomRow>
            </OrdLeft>
            <BluePanel>
                <BlueBand />
                <BlueBand $mt={32} />
                <BlueBand $mt={54} $pr={28} $ink="#7f7f7f">Preparat med motsvarande ATC-kod</BlueBand>
                <BlueBand $mt={53} />
                <DateCell>2010-11-02</DateCell>
                <BlueBand $mt={42} $pr={92}>Kommentar</BlueBand>
                <BlueBand $mt={48} />
            </BluePanel>
        </OrdBody>
    </Win>
);

const SearchDialog = () => (
    <Win $x={238} $y={84} $w={804} $h={614}>
        <TitleBar $active $pad="0 3px 0 2px">
            <Icon name="logo" />
            <TitleText $ml={2}>Sök preparat</TitleText>
            <CtrlBtn><CtrlGlyph kind="min" /></CtrlBtn>
            <CtrlBtn><CtrlGlyph kind="max" /></CtrlBtn>
            <CtrlBtn $ml={2}><CtrlGlyph kind="x" /></CtrlBtn>
        </TitleBar>
        <DialogBody>
            <DialogMain>
                <SearchRow>
                    <Sized $w={80}>Sök <u>b</u>land:</Sized>
                    <Combo $w={199} $h={21}><ComboText>Samtliga</ComboText><ComboBtn /></Combo>
                    <Sized $w={61} $ml={21}><u>S</u>ök efter:</Sized>
                    <InputBox $w={148}>metformin</InputBox>
                </SearchRow>
                <TabRow $h={21} $mt={7}>
                    <Tab $active $h={20} $w={58}>Apoteket</Tab>
                    <Tab $h={17} $w={97}>Favoritordinationer</Tab>
                    <Tab $h={17} $w={109}>Skapa eget preparat</Tab>
                </TabRow>
                <TabPane $outer $h={504} $pad="7px 4px 4px 4px">
                    <TabRow $h={20} $pl={2}>
                        <Tab $h={18} $w={41} $pr={7}>ATC</Tab>
                        <Tab $h={18} $w={56}>Substans</Tab>
                        <Tab $active $h={20} $w={55}>Preparat</Tab>
                    </TabRow>
                    <TabPane $h={473} $pad="8px 10px 0 11px">
                        <ListBox>
                            <ListTop />
                            {drugs.map((d, i) => (
                                <ListLine key={d} $sel={i === 4}>{d}</ListLine>
                            ))}
                        </ListBox>
                        <ListView>
                            <LvHead>
                                <LvHeadCell>Preparat med samma ATC-kod</LvHeadCell>
                                <LvHeadCell $pl={7}>Rek</LvHeadCell>
                                <LvHeadCell>Styrka</LvHeadCell>
                                <LvHeadCell $pl={6}>Läkemedelsform</LvHeadCell>
                                <LvHeadCell />
                            </LvHead>
                            <LvRows>
                                <LvRow $sel><span>METFORMIN MEDA</span><span>R</span><span>500 MG</span><span>TABL</span></LvRow>
                                <LvRow><span>METFORMIN MEDA</span><span>R</span><span>850 MG</span><span>TABL</span></LvRow>
                            </LvRows>
                        </ListView>
                        <PriceBox>
                            <PriceTable>
                                {prices.flat().map((c, i) => <PriceCell key={i}>{c}</PriceCell>)}
                            </PriceTable>
                        </PriceBox>
                    </TabPane>
                </TabPane>
            </DialogMain>
            <DialogSide>
                <PushBtn $def $h={22}>OK</PushBtn>
                <PushBtn $mt={6}>Avbryt</PushBtn>
                <PushBtn $mt={19} $h={22}><span><u>F</u>ASS...</span></PushBtn>
            </DialogSide>
        </DialogBody>
        <GripBar><Icon name="grip" w={11} h={11} /></GripBar>
    </Win>
);

const App = () => (
    <Desktop>
        <Global />
        <MainChrome />
        <Workspace>
            <LeftNav />
            <RightPane />
        </Workspace>
        <RightBack />
        <OrderWindow />
        <SearchDialog />
        <StatusBar>
            <StatusCell />
            <StatusCell>DS Kirurgmott</StatusCell>
            <StatusCell>Kim Testsson</StatusCell>
            <StatusCell $pl={5}>11:17</StatusCell>
        </StatusBar>
        <Taskbar>
            <StartBtn><Icon name="winflag" /><span>Start</span></StartBtn>
            <TaskBtn $ml={5}><Icon name="logo" /><span>Take Care</span></TaskBtn>
            <TaskBtn $ml={4}><Icon name="word" /><span>Dokument1 - Microsoft ...</span></TaskBtn>
            <Tray>
                <b>«</b>
                <Icon name="office" />
                <Icon name="netpc" />
                <Icon name="traffic" />
                <Icon name="screens" />
                <TrayTime>11:18</TrayTime>
            </Tray>
        </Taskbar>
    </Desktop>
);

export default App;
